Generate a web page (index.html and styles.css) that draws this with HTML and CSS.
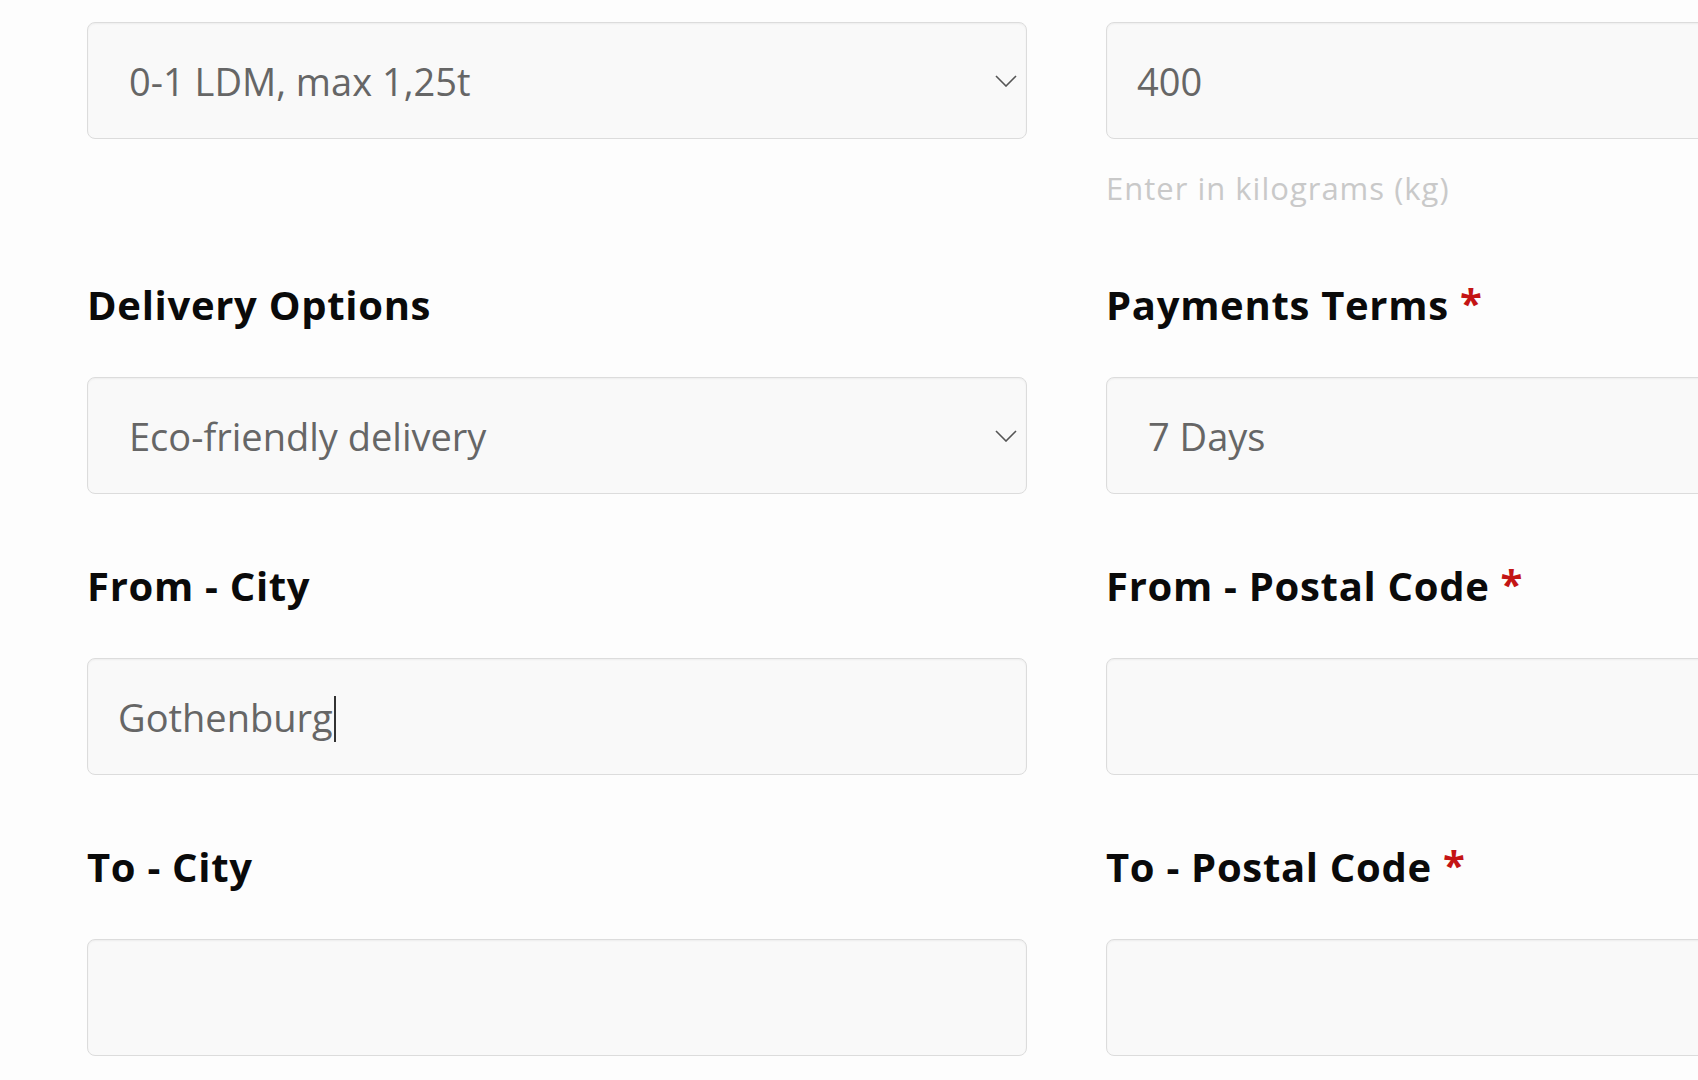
FILE: index.html
```html
<!DOCTYPE html>
<html lang="en">
<head>
<meta charset="utf-8">
<title>Shipment form</title>
<link rel="stylesheet" href="styles.css">
</head>
<body>
<main class="form">
  <div class="field">
    <div class="box select">
      <span class="value">0-1 LDM, max 1,25t</span>
      <svg class="chevron" width="22" height="12" viewBox="0 0 22 12"><polyline points="1,1 11,11 21,1" fill="none" stroke="#555" stroke-width="1.6"/></svg>
    </div>
  </div>
  <div class="field">
    <div class="box input"><span class="value">400</span></div>
    <p class="hint">Enter in kilograms (kg)</p>
  </div>

  <div class="field">
    <h2 class="label">Delivery Options</h2>
    <div class="box select">
      <span class="value">Eco-friendly delivery</span>
      <svg class="chevron" width="22" height="12" viewBox="0 0 22 12"><polyline points="1,1 11,11 21,1" fill="none" stroke="#555" stroke-width="1.6"/></svg>
    </div>
  </div>
  <div class="field">
    <h2 class="label">Payments Terms <span class="req">*</span></h2>
    <div class="box select"><span class="value">7 Days</span></div>
  </div>

  <div class="field">
    <h2 class="label">From - City</h2>
    <div class="box input"><span class="value">Gothenburg</span><span class="caret"></span></div>
  </div>
  <div class="field">
    <h2 class="label">From - Postal Code <span class="req">*</span></h2>
    <div class="box input"></div>
  </div>

  <div class="field">
    <h2 class="label">To - City</h2>
    <div class="box input"></div>
  </div>
  <div class="field">
    <h2 class="label">To - Postal Code <span class="req">*</span></h2>
    <div class="box input"></div>
  </div>
</main>
</body>
</html>
```

FILE: styles.css
```css
html, body {
  margin: 0;
  padding: 0;
  background: #fdfdfd;
  overflow: hidden;
  font-family: "Open Sans", "Liberation Sans", sans-serif;
}

.form {
  display: grid;
  grid-template-columns: 940px 940px;
  column-gap: 79px;
  row-gap: 69px;
  padding: 22px 0 0 87px;
  width: max-content;
}

.field {
  display: flex;
  flex-direction: column;
}

.label {
  margin: 0 0 49px 0;
  font-size: 40px;
  line-height: 46px;
  font-weight: 700;
  letter-spacing: 0.7px;
  color: #0a0a0a;
  white-space: nowrap;
}

.req {
  color: #c41414;
  margin-left: 0;
  position: relative;
  top: -2px;
}

.box {
  box-sizing: border-box;
  height: 117px;
  display: flex;
  align-items: center;
  background: #f9f9f9;
  border: 1.5px solid #dcdcdc;
  border-radius: 8px;
  box-shadow: inset 0 1px 2px rgba(0, 0, 0, 0.05);
  font-size: 38px;
  color: #666;
}

.select {
  padding: 0 9px 0 41px;
}

.input {
  padding: 0 30px;
}

.value {
  white-space: nowrap;
}

.chevron {
  margin-left: auto;
  flex: none;
}

.caret {
  display: inline-block;
  width: 2px;
  height: 46px;
  background: #333;
  margin-left: 1px;
  margin-top: 4px;
}

.hint {
  margin: 29px 0 5px 0;
  font-size: 31px;
  line-height: 40px;
  letter-spacing: 1px;
  color: #c9c9c9;
}
```
